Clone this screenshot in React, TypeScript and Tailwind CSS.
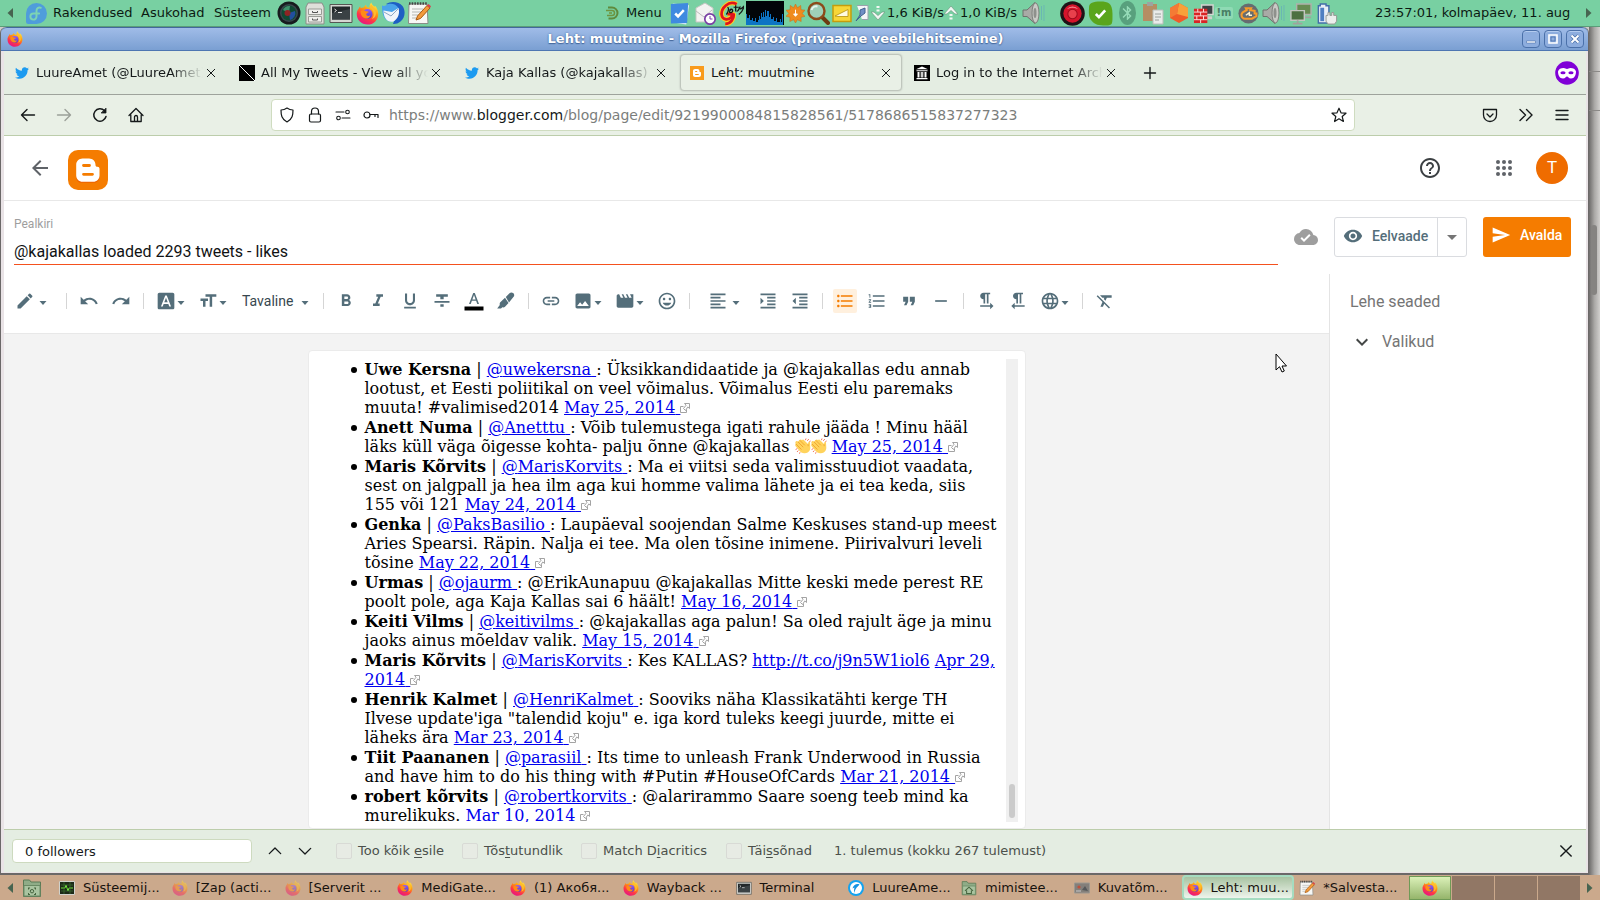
import { useId, type ReactNode } from "react";
import {
  MdArrowBack, MdCloudDone, MdEdit, MdExpandMore, MdFontDownload, MdFormatAlignLeft, MdFormatBold,
  MdFormatClear, MdFormatIndentDecrease, MdFormatIndentIncrease, MdFormatItalic, MdFormatListBulleted,
  MdFormatListNumbered, MdFormatQuote, MdFormatSize, MdFormatStrikethrough, MdFormatTextdirectionLToR,
  MdFormatTextdirectionRToL, MdFormatUnderlined, MdHelpOutline, MdImage, MdInsertEmoticon, MdLanguage, MdLink,
  MdMovie, MdRedo, MdRemove, MdSend, MdUndo, MdVisibility, MdBluetooth,
} from "react-icons/md";
import { FaTwitter } from "react-icons/fa";

/* ---------- drawings ---------- */

function Firefox({ className = "size-4" }: { className?: string }) {
  const id = useId();
  return (
    <svg viewBox="0 0 24 24" className={className} aria-hidden="true">
      <defs>
        <linearGradient id={id + "a"} x1="0.8" y1="0" x2="0.3" y2="1">
          <stop offset="0" stopColor="#fff44f" />
          <stop offset="0.4" stopColor="#ff980e" />
          <stop offset="0.7" stopColor="#ff3647" />
          <stop offset="1" stopColor="#e31587" />
        </linearGradient>
        <linearGradient id={id + "b"} x1="0.5" y1="0" x2="0.5" y2="1">
          <stop offset="0" stopColor="#9059ff" />
          <stop offset="1" stopColor="#5b3fc0" />
        </linearGradient>
      </defs>
      <path fill={`url(#${id}a)`} d="M2.6 7.2C3 6 3.7 5 4.4 4.4l.4 2.1c1-.8 2.300-1 3.400-.7.4-1.200 1.300-2.300 2.400-2.900-.1 1 .2 1.900 1.200 2.500l2.200.6C14 4 14.300 2 16 .4c.3 2 1.600 3 3.400 4.600l.4-1.200c2 2 3.400 5 3.400 8.600C23.200 18.800 18.200 23.600 12 23.600S.8 18.800.8 12.600c0-2 .6-4 1.800-5.400z" />
      <circle cx="12" cy="12.600" r="5.200" fill={`url(#${id}b)`} />
      <path fill="#ff8a16" d="M5 9.500c2-1.500 4-1 5.200.2 1.500 0 2.900.1 3 .8-.1.900-2.200 1.200-2.500 2-.2 1.800 2.300 2.700 4.300 1.300-.6 2.700-3 3.800-5 3.400C6.500 16.500 4.400 13 5 9.500z" />
      <path fill="#ffbd2f" d="M14.500 6.300c2.500 1.300 4 3.500 4 6.500 0 2-.8 3.800-2 5 3.600-1.200 5-5 4-8.200-.7-2.400-3-4.300-4.500-6.600-.8 1-1.300 2-1.500 3.300z" />
    </svg>
  );
}

function Thunderbird() {
  return (
    <svg viewBox="0 0 24 24" className="size-6" aria-hidden="true">
      <path fill="#1e5fc4" d="M5 3c5-3.500 13-2.500 16.500 2 3.500 5 2.500 12-2 15.500-2 1.800-5 2.700-7.500 2.500L17 8z" />
      <path fill="#4aa3ea" d="M1 4.500c1.500.7 3 .5 4-.3C9 1.500 15 3 17.500 7l-4 13C6 23 .5 16.500 1 4.500z" />
      <path fill="#f1f5fa" d="M2.500 9.500 11 11l6.500-4c1.500 5 0 10.500-5 13.500C6.500 22 2.500 17 2.500 9.500z" />
      <path fill="none" stroke="#8ea6c4" d="M3 11l7 4 7-7" />
    </svg>
  );
}

function Lens() {
  return (
    <svg viewBox="0 0 24 24" className="size-6" aria-hidden="true">
      <circle cx="12" cy="12" r="11.500" fill="#171b1e" />
      <circle cx="12" cy="12" r="9" fill="#39464c" />
      <circle cx="12" cy="12" r="7.500" fill="#0f4a33" />
      <path d="M6 9a7 7 0 0 1 7-4l-1 7z" fill="#3f8f6a" />
      <path d="M18 10a7 7 0 0 1-5 9l-1-7z" fill="#214f9e" />
      <circle cx="10.500" cy="12" r="3" fill="#8f2424" />
    </svg>
  );
}

function Cabinet() {
  return (
    <svg viewBox="0 0 24 24" className="size-6" aria-hidden="true">
      <path d="M5 2h14l2 4v17H3V6z" fill="#dedfda" stroke="#8b8d88" />
      <path d="M5.500 8h13v5.500h-13zM5.500 15.500h13V21h-13z" fill="#efefec" stroke="#9a9c97" />
      <path d="M9.500 10v1.500h5V10M9.500 17.500V19h5v-1.500" fill="none" stroke="#555" />
    </svg>
  );
}

function TerminalIcon({ className = "size-6" }: { className?: string }) {
  return (
    <svg viewBox="0 0 24 24" className={className} aria-hidden="true">
      <path d="M1 3.500h22v18H1z" fill="#d5d6d2" stroke="#555753" />
      <path d="M3 5.500h18v13H3z" fill="#23282a" />
      <path d="M3 12l18-4v10.500H3z" fill="#3a4144" />
      <path d="M5.500 8l2 1.500-2 1.500M9 11.500h4" fill="none" stroke="#e6e6e6" />
    </svg>
  );
}

function Notepad({ className = "size-6" }: { className?: string }) {
  return (
    <svg viewBox="0 0 24 24" className={className} aria-hidden="true">
      <path d="M2 3h18l1 19.500H1.500z" fill="#f7f7f5" stroke="#8a8c88" />
      <path d="M2 2.500h18" stroke="#444" strokeWidth="2.500" strokeDasharray="1.500 1.200" />
      <path d="M5 8h11M5 11h9M5 14h7M5 17h4" stroke="#b5b7b3" />
      <path d="M9 19l1.500-4L20 4.500l3 2.500-9.500 10.500z" fill="#f39a3c" stroke="#a85c12" />
      <path d="M20 4.500L21.500 3 24 5.200 23 7z" fill="#d9404d" />
    </svg>
  );
}

function Fedora() {
  return (
    <svg viewBox="0 0 24 24" className="size-[21px]" aria-hidden="true">
      <path d="M12 0a12 12 0 1 1 0 24H2.500A2.500 2.500 0 0 1 0 21.500V12A12 12 0 0 1 12 0z" fill="#4f9ddb" />
      <path d="M17 5.500c-3-1-5 .8-5 3.500v6.500a3.500 3.500 0 1 1-3.500-3.500H15" fill="none" stroke="#7cd3b4" strokeWidth="2.200" strokeLinecap="round" />
    </svg>
  );
}

function Speaker() {
  return (
    <svg viewBox="0 0 24 24" className="size-6" aria-hidden="true">
      <path d="M1 9h4l8-7.500c4 4 4 17 0 21L5 15.500H1z" fill="#a9aaa6" stroke="#6f716d" />
      <ellipse cx="13.500" cy="12" rx="3.500" ry="10" fill="#c9cac6" stroke="#7d7f7b" />
      <ellipse cx="13" cy="12" rx="1.500" ry="5" fill="#8e908c" />
      <path d="M19.500 5v14M22 4v16" stroke="#6ab7b3" />
    </svg>
  );
}

function BloggerLogo({ className, color }: { className: string; color: string }) {
  return (
    <svg viewBox="0 0 40 40" className={className} aria-hidden="true">
      <rect width="40" height="40" rx="10" fill={color} />
      <path fill="#e65100" d="M13 32.800h13c3 0 5.500-2.500 5.500-5.500v-1H8.200c0 4 2 6.500 4.800 6.500z" opacity=".6" />
      <path fill="#fff" d="M14.500 8.500H21c3.800 0 6.500 2.800 6.500 6.300 0 1.500.6 2 2 2 1.200 0 2 .8 2 2v6.700c0 3.500-2.700 6.300-6.300 6.300H14.500c-3.500 0-6.300-2.800-6.300-6.300V14.800c0-3.500 2.800-6.300 6.300-6.300z" />
      <path d="M15.500 15.500h6M15.500 24.300h9" stroke={color} strokeWidth="2.800" strokeLinecap="round" />
    </svg>
  );
}

function Line({ children, className = "size-4", width = 1.1 }: { children: ReactNode; className?: string; width?: number }) {
  return (
    <svg viewBox="0 0 16 16" className={className} fill="none" stroke="currentColor" strokeWidth={width} strokeLinecap="round" strokeLinejoin="round" aria-hidden="true">
      {children}
    </svg>
  );
}

function Caret({ className = "" }: { className?: string }) {
  return (
    <svg viewBox="0 0 8 4" className={"h-1 w-2 " + className} aria-hidden="true">
      <path d="M0.500 0h7L4 4z" fill="currentColor" />
    </svg>
  );
}

function Clap() {
  return (
    <svg viewBox="0 0 16 16" className="inline-block size-4 align-[-2px]" role="img" aria-label="👏">
      <path d="M.8 3.500c.8-.8 1.500-.4 2 .2L4.500 2c.9-.9 1.800-.6 2.300 0l1.500-.4L13 6l.3-1.500c.2-1 1.700-.8 1.700.4l.3 4.600c.1 3.200-2.200 5.600-5.300 5.800-2.600.2-4.500-1-6-3L.6 8.200C0 7.300.2 6.300.8 5.800.2 5 .2 4.100.8 3.500z" fill="#ffd35c" />
      <path d="M2.800 3.700l5.400 5.500M.9 5.900l5.500 5.600M4.800 2.300l5 5M13 6.200l.2 2" stroke="#ee9c25" strokeWidth=".8" fill="none" />
      <path d="M11 .5l-.6 1.700M13.800 1l-1.500 1.800M15.600 3l-1.200.6M.6 11.500l1.700-.9M2 14l1.300-1.500M4.500 15.700l.5-1.500" stroke="#f0674a" strokeWidth=".9" />
    </svg>
  );
}

function ExternalMark() {
  return (
    <svg viewBox="0 0 10 10" className="inline-block size-2.5 align-baseline" fill="none" stroke="#a3a3a3" aria-hidden="true">
      <path d="M3.500 3.500h-3v6h6v-3" />
      <path d="M4.500.5h5v5l-1.700-1.600-2.300 3.600-2-2 2.600-3.300z" />
    </svg>
  );
}

function PanelArrow({ back = false }: { back?: boolean }) {
  return (
    <svg viewBox="0 0 6 10" className="h-2.5 w-1.5 shrink-0" aria-hidden="true">
      <path d={back ? "M6 0v10L0.500 5z" : "M0 0v10L5.500 5z"} fill="#476450" />
    </svg>
  );
}

/* ---------- desktop panel ---------- */

function Slot({ children, className = "w-[26px]" }: { children: ReactNode; className?: string }) {
  return <span className={"flex h-full shrink-0 items-center justify-center " + className}>{children}</span>;
}

function TopPanel() {
  return (
    <header className="flex h-[27px] shrink-0 items-center border-b border-[#5b9c79] bg-[#78d0a2] text-[13px] text-[#0c1a12]">
      <Slot className="w-5"><PanelArrow back /></Slot>
      <nav className="flex h-full items-center">
        <button className="flex w-[118px] items-center gap-1.5 pl-1.5"><Fedora />Rakendused</button>
        <button className="w-[76px] pl-[3px] text-left">Asukohad</button>
        <button className="w-[62px] text-left">Süsteem</button>
      </nav>
      <div className="flex h-full items-center">
        <Slot><Lens /></Slot>
        <Slot><Cabinet /></Slot>
        <Slot><TerminalIcon /></Slot>
        <Slot><Firefox className="size-[23px]" /></Slot>
        <Slot><Thunderbird /></Slot>
        <Slot><Notepad /></Slot>
      </div>
      <div className="ml-auto flex h-full items-center">
        <button className="flex w-[60px] items-center gap-1.5">
          <svg viewBox="0 0 14 14" className="size-3.5 shrink-0" fill="none" aria-hidden="true">
            <path d="M2 1.500h4a5.500 5.500 0 0 1 0 11H2.500" stroke="#5f8a3c" strokeWidth="2" />
            <path d="M0 4.500h6a2.500 2.500 0 0 1 0 5H1M3 7h3" stroke="#6e9440" strokeWidth="1.500" />
          </svg>
          Menu
        </button>
        <Slot>
          <svg viewBox="0 0 24 24" className="size-[23px]" aria-hidden="true">
            <path d="M5 1.500l17 2-3 20-14-2z" fill="#dceafa" />
            <path d="M3 2l18-1-1 21-17 .5z" fill="#3f8ae0" />
            <path d="M7.500 12l3 3 6-6.500" fill="none" stroke="#fff" strokeWidth="2.600" />
          </svg>
        </Slot>
        <Slot>
          <svg viewBox="0 0 24 24" className="size-6" aria-hidden="true">
            <path d="M3 7l9-5 8 5v14H3z" fill="#f3f3f1" stroke="#c3c5c1" />
            <path d="M3 10l8 6 8-7" fill="none" stroke="#bbb" />
            <circle cx="17" cy="18" r="5.200" fill="#fff" stroke="#7a3fa5" strokeWidth="1.700" />
            <path d="M17 15v3h2.500" fill="none" stroke="#7a3fa5" />
          </svg>
        </Slot>
        <Slot>
          <svg viewBox="0 0 24 24" className="size-[25px]" fill="none" aria-hidden="true">
            <path d="M17 3C9-1 2 7 2.500 13c.5 5 6 6 9.500 2.500l.5-3H8M14 12c1 5-3 10-8 10" stroke="#ffd21f" strokeWidth="4.500" />
            <path d="M17 3C9-1 2 7 2.500 13c.5 5 6 6 9.500 2.500l.5-3H8M14 12c1 5-3 10-8 10" stroke="#e0141c" strokeWidth="2.600" />
            <path d="M8 6c2 0 1 5-1 7M10 9c3-3 4 1 2 2s-3-1 0-3M16 4v6M14 6h5M17 10c2 0 2-3 3-4 0 3 2 1 4-1-1 4-2 6-5 8" stroke="#161616" strokeWidth="1.200" />
          </svg>
        </Slot>
        <svg viewBox="0 0 38 24" className="ml-0.5 h-6 w-[38px]" aria-hidden="true">
          <path d="M0 0h38v24H0z" fill="#020509" />
          <path d="M0 24V13h1v4h2v-3h1v5h2v-2h1v3h2v-3h1v4h2v-2h1v-4h1v3h1v-6h1v4h1v-5h1v5h1v-7h1v6h1v-5h2v6h1v-3h1v5h2v-2h1v4h2v-3h1v4h3v-3h1v3h1v-8h1v12z" fill="#0d74c4" />
        </svg>
        <Slot className="w-[22px]">
          <svg viewBox="0 0 20 20" className="size-[19px]" aria-hidden="true">
            <path d="M10 0l2 4 3.500-2.500L15.800 6l4.200.5L17 10l3 3-4.200 1 .2 4.500-4-2-2 3.500-2-3.500-4 2 .2-4.500L0 13l3-3-3-3.500L4.200 6l.3-4.500L8 4z" fill="#ef8b1d" stroke="#c9630d" strokeWidth=".5" />
            <path d="M10 6v5M8 10.500l2 2.500 2-2.500z" fill="#fff" stroke="#fff" />
          </svg>
        </Slot>
        <Slot className="w-6">
          <svg viewBox="0 0 24 24" className="size-6" aria-hidden="true">
            <path d="M15 15l7 7" stroke="#6d3b12" strokeWidth="4" strokeLinecap="round" />
            <circle cx="10.500" cy="10" r="8" fill="#9fd0b8" stroke="#8c4a1a" strokeWidth="2.400" />
            <path d="M5.500 9a5 5 0 0 1 6-3.500" stroke="#e9f6ef" strokeWidth="2" fill="none" />
          </svg>
        </Slot>
        <Slot className="w-6">
          <svg viewBox="0 0 20 18" className="h-[19px] w-5" aria-hidden="true">
            <path d="M1 1h18v16H1z" fill="#f7d637" stroke="#c49c0d" strokeWidth="1.500" />
            <path d="M3 11.500L16 5v7H6z" fill="#fffbe0" stroke="#b4900e" strokeWidth=".8" />
          </svg>
        </Slot>
        <Slot className="w-[15px]">
          <svg viewBox="0 0 14 18" className="h-[18px] w-3.5" aria-hidden="true">
            <path d="M2 1.500h11v14H7" fill="#f4f5f7" stroke="#9aa2ad" />
            <path d="M1 17l4-6V6l5-2v5l-4 3z" fill="#6f8fc4" stroke="#41618f" />
          </svg>
        </Slot>
        <span className="flex w-[75px] items-center gap-0.5 pl-0.5 whitespace-nowrap">
          <svg viewBox="0 0 14 16" className="h-4 w-3.5 shrink-0" aria-hidden="true"><path d="M0 7h3l4 3.500L11 7h3l-7 8z" fill="#f1f7f3" stroke="#6f9a82" strokeWidth=".7" /><path d="M7 1v6" stroke="#f1f7f3" strokeWidth="3" strokeDasharray="2 1.500" /></svg>
          1,6 KiB/s
        </span>
        <span className="flex w-[76px] items-center gap-0.5 whitespace-nowrap">
          <svg viewBox="0 0 14 16" className="h-4 w-3.5 shrink-0" aria-hidden="true"><path d="M0 9h3l4-3.500L11 9h3L7 1z" fill="#f1f7f3" stroke="#6f9a82" strokeWidth=".7" /><path d="M7 9v6" stroke="#f1f7f3" strokeWidth="3" strokeDasharray="2 1.500" /></svg>
          1,0 KiB/s
        </span>
        <Slot className="w-7"><Speaker /></Slot>
      </div>
      <div className="ml-2.5 flex h-full items-center">
        <Slot className="w-7">
          <svg viewBox="0 0 24 24" className="size-[25px]" aria-hidden="true">
            <circle cx="12" cy="12" r="11.800" fill="#1e1416" />
            <circle cx="12" cy="12" r="8.800" fill="#d5142b" />
            <circle cx="12" cy="12.500" r="4.500" fill="#e8404c" stroke="#9f0b1d" />
            <path d="M6.500 8a7 7 0 0 1 11 0c-3-2-8-2-11 0z" fill="#f38e94" />
          </svg>
        </Slot>
        <Slot className="w-7">
          <svg viewBox="0 0 24 24" className="size-[25px]" aria-hidden="true">
            <path d="M1 6c0-4 4-5.500 11-5.500S23.500 2 23.500 12 24 23.500 17 23.500 7 23 3.500 19 1 10 1 6z" fill="#5aa51c" />
            <path d="M7.500 12.500l3 3 6-6.500" fill="none" stroke="#fff" strokeWidth="2.600" />
          </svg>
        </Slot>
        <Slot>
          <span className="flex h-6 w-[17px] items-center justify-center rounded-[50%] bg-[#58a07d] text-[#96dcb8]"><MdBluetooth size={20} /></span>
        </Slot>
        <Slot>
          <svg viewBox="0 0 22 24" className="h-6 w-[22px]" aria-hidden="true">
            <path d="M1 3h14v17H1z" fill="#b58d63" /><path d="M5 1h6v4H5z" fill="#9da3a0" />
            <path d="M11 9h10v14H11z" fill="#e9ebe9" stroke="#b9bdba" /><path d="M13 13h6M13 16h6M13 19h4" stroke="#9aa09c" />
          </svg>
        </Slot>
        <Slot>
          <svg viewBox="0 0 20 22" className="h-[22px] w-5" aria-hidden="true">
            <path d="M1 6l9-5 9 5v10l-9 5-9-5z" fill="#f05a28" /><path d="M10 1l9 5v9L8 12z" fill="#f9a13a" /><path d="M10 1L8 12l-7 4V6z" fill="#f47b35" />
          </svg>
        </Slot>
        <Slot className="w-[22px]">
          <svg viewBox="0 0 22 22" className="size-[21px]" aria-hidden="true">
            <path d="M9 2h12v10H9z" fill="#3c4144" stroke="#d5d6d2" strokeWidth="1.500" /><path d="M14 14h6v3h-6z" fill="#cfd0cc" />
            <path d="M1 6h14v15H1z" fill="#d92424" />
            <path d="M1 9.500h14M1 13.500h14M1 17.500h14M5 6v3.500M11 6v3.500M8 9.500v4M4 13.500v4M11 13.500v4M8 17.500V21" stroke="#fbe3e3" />
          </svg>
        </Slot>
        <Slot className="w-5">
          <span className="rounded-xs bg-[#8fdab4] px-0.5 text-[10px] leading-3 font-bold text-[#498065]">!m</span>
        </Slot>
        <Slot className="w-7">
          <svg viewBox="0 0 24 24" className="size-[21px]" aria-hidden="true">
            <circle cx="12" cy="12" r="11.500" fill="#666c70" />
            <path d="M4 13c1-4 4-3 6-5l-1-2h6l-1 2 5 1v3h2v3l-5 3H8c-2 0-4-2-4-5z" fill="none" stroke="#f59b2b" strokeWidth="2.400" />
            <path d="M9 14l4-3v3h3" stroke="#fff3cf" strokeWidth="1.600" fill="none" />
          </svg>
        </Slot>
        <Slot className="w-6"><Speaker /></Slot>
        <Slot className="w-7">
          <svg viewBox="0 0 24 24" className="size-[23px]" aria-hidden="true">
            <path d="M8 2h15v11H8z" fill="#668b52" stroke="#aeb2ac" strokeWidth="1.500" />
            <path d="M2 9h14v10H2z" fill="#4c7042" stroke="#c3c6c1" strokeWidth="1.500" />
            <path d="M4 22.500h10M9 19v3M17 16h6" stroke="#9fa39d" strokeWidth="1.800" />
          </svg>
        </Slot>
        <Slot>
          <svg viewBox="0 0 22 24" className="h-[23px] w-[22px]" aria-hidden="true">
            <path d="M2 4h2V2h6v2h3v18H2z" fill="#e8eef7" stroke="#426da9" strokeWidth="1.500" /><path d="M4 6h4v14H4z" fill="#4f7fc2" />
            <path d="M10 14h2v-3h2v3h2v-3h2v3h3v6l-2 3h-7l-2-3z" fill="#eceeec" stroke="#949893" />
          </svg>
        </Slot>
      </div>
      <time className="ml-[35px] w-[202px] whitespace-nowrap">23:57:01, kolmapäev, 11. aug</time>
      <Slot className="w-[23px]"><PanelArrow /></Slot>
    </header>
  );
}

/* ---------- browser ---------- */

function TitleBar() {
  const button = "flex size-[18px] items-center justify-center rounded border border-[#4a70a9] bg-[#8dadde] text-white shadow-[inset_0_1px_0_#b3cbef]";
  return (
    <div className="flex h-6 shrink-0 items-center rounded-t-md border-t border-b border-t-[#42689c] border-b-[#4d76b2] bg-linear-to-b from-[#a0bce8] to-[#7a9fd2] pr-1 pl-1.5">
      <Firefox className="size-4" />
      <h1 className="flex-1 pl-1.5 text-center text-[13px] font-bold text-white [text-shadow:0_1px_1px_#45689c,0_0_2px_#45689c]">
        Leht: muutmine - Mozilla Firefox (privaatne veebilehitsemine)
      </h1>
      <div className="flex gap-1">
        <button className={button} aria-label="Minimeeri"><svg viewBox="0 0 12 12" className="size-3"><path d="M1.500 8h9v2h-9z" fill="#fff" stroke="#4a70a9" strokeWidth=".6" /></svg></button>
        <button className={button} aria-label="Maksimeeri"><svg viewBox="0 0 12 12" className="size-3"><path d="M2 2h8v8H2z" fill="none" stroke="#fff" strokeWidth="1.600" /><path d="M4 4h4v4H4z" fill="none" stroke="#4a70a9" strokeWidth=".8" /></svg></button>
        <button className={button} aria-label="Sulge"><svg viewBox="0 0 12 12" className="size-3"><path d="M2.500 2.500l7 7M9.500 2.500l-7 7" stroke="#4a70a9" strokeWidth="3.400" /><path d="M2.500 2.500l7 7M9.500 2.500l-7 7" stroke="#fff" strokeWidth="2" /></svg></button>
      </div>
    </div>
  );
}

function CloseX({ className = "size-2.5" }: { className?: string }) {
  return (
    <svg viewBox="0 0 10 10" className={className} stroke="currentColor" strokeWidth="1" aria-hidden="true"><path d="M1 1l8 8M9 1l-8 8" /></svg>
  );
}

const tabs: { title: string; icon: ReactNode; active?: boolean }[] = [
  { title: "LuureAmet (@LuureAmet) / Twitter", icon: <FaTwitter size={14} color="#1d9bf0" /> },
  {
    title: "All My Tweets - View all your tweets",
    icon: <svg viewBox="0 0 16 16" className="size-4"><path d="M0 0h16v16H0z" /><path d="M0 0l16 16" stroke="#fff" /></svg>,
  },
  { title: "Kaja Kallas (@kajakallas) / Twitter", icon: <FaTwitter size={14} color="#1d9bf0" /> },
  {
    title: "Leht: muutmine",
    active: true,
    icon: (
      <svg viewBox="0 0 14 14" className="size-3.5">
        <path d="M0 0h14v14H0z" fill="#f99b1c" />
        <path d="M5 3h2.500C9 3 9.500 4 9.500 5.300c0 .6.200.8.800.8.500 0 .7.300.7.700V9c0 1.300-.9 2-2 2H5c-1.200 0-2-.9-2-2V5c0-1.200.9-2 2-2z" fill="#fff" />
        <path d="M5.200 5.500h2M5.200 8.500h3.500" stroke="#f99b1c" />
      </svg>
    ),
  },
  {
    title: "Log in to the Internet Archive",
    icon: (
      <svg viewBox="0 0 16 16" className="size-4">
        <path d="M0 0h16v16H0z" />
        <path d="M2 4.200L8 1.500l6 2.700zM2.500 5.200h11v1h-11zM3.500 7h1.500v5.500H3.500zM7.200 7h1.600v5.500H7.200zM11 7h1.500v5.500H11zM5.500 7h.8v5.500h-.8zM9.700 7h.8v5.500h-.8zM2.500 13h11v1.200h-11z" fill="#fff" />
      </svg>
    ),
  },
];

function TabStrip() {
  return (
    <div className="flex h-11 shrink-0 items-center gap-[3px] border-b border-[#9ea39c] bg-[#e4ede2] pl-px text-[13px] text-[#15191a]">
      {tabs.map((tab) => (
        <div
          key={tab.title}
          className={
            "flex h-[37px] w-[222px] min-w-0 items-center rounded border pl-2 pr-2.5 " +
            (tab.active ? "border-[#bfc6bd] bg-[#e9f0e6] shadow-[0_0_2px_rgba(0,0,0,0.2)]" : "border-transparent")
          }
        >
          <a href="#tab" className="mr-[3px] flex min-w-0 flex-1 items-center gap-1.5">
            <span className="flex w-4 shrink-0 justify-center">{tab.icon}</span>
            <span className={"flex-1 overflow-hidden whitespace-nowrap " + (tab.active ? "" : "[mask-image:linear-gradient(to_right,black_calc(100%-32px),transparent)]")}>
              {tab.title}
            </span>
          </a>
          <button aria-label="Sulge kaart" className="flex size-2.5 shrink-0"><CloseX className="size-2.5" /></button>
        </div>
      ))}
      <button aria-label="Uus kaart" className="ml-1 flex size-8 items-center justify-center">
        <Line width={1.4} className="size-4"><path d="M8 2.500v11M2.500 8h11" /></Line>
      </button>
      <svg viewBox="0 0 24 24" className="mr-[7px] ml-auto size-6" role="img" aria-label="Privaatne veebilehitsemine">
        <circle cx="12" cy="12" r="11.800" fill="#8000d7" />
        <path d="M3 10.500C3.500 8 6 7 8.500 7c2 0 2 1 3.500 1s1.500-1 3.500-1c2.500 0 5 1 5.500 3.500 0 3.500-1.500 7-5 7-2.500 0-2.700-2-4-2s-1.500 2-4 2c-3.500 0-5-3.500-5-7z" fill="#fff" />
        <ellipse cx="8" cy="11.800" rx="2.600" ry="1.500" fill="#8000d7" /><ellipse cx="16" cy="11.800" rx="2.600" ry="1.500" fill="#8000d7" />
      </svg>
    </div>
  );
}

function NavBar() {
  const b = "flex h-8 w-9 items-center justify-center";
  const u = "flex w-7 justify-center";
  return (
    <div className="flex h-[41px] shrink-0 items-center border-b border-[#bccdab] bg-[#e9f0e6] px-1.5 text-[#15191a]">
      <button aria-label="Tagasi" className={b}><Line width={1.4}><path d="M14.500 8h-13M7 2.500L1.500 8 7 13.500" /></Line></button>
      <button aria-label="Edasi" className={b + " text-[#9ba099]"}><Line width={1.4}><path d="M1.500 8h13M9 2.500L14.500 8 9 13.500" /></Line></button>
      <button aria-label="Laadi uuesti" className={b}><Line width={1.5}><path d="M14 9.500a6.200 6.200 0 1 1-1.500-5.800" /><path d="M14 1.500v4.500H9.500z" fill="currentColor" strokeWidth={0.8} /></Line></button>
      <button aria-label="Avaleht" className={b}><Line width={1.3}><path d="M1 8.500L8 1.500l7 7M2.800 7.500V14.500h10.400V7.500M6.500 14.500V10a1.500 1.500 0 0 1 3 0v4.500" /></Line></button>
      <div className="mx-[117px] flex h-8 min-w-0 flex-1 items-center rounded border border-[#cfdcc0] bg-white px-px">
        <span className={u}><Line className="size-4" width={1.2}><path d="M8 1c2 1.500 4 2 6 2 0 5-.5 9-6 12C2.500 12 2 8 2 3c2 0 4-.5 6-2z" /></Line></span>
        <span className={u}><Line className="size-4" width={1.2}><rect x="2.500" y="7" width="11" height="8" rx="1.500" /><path d="M4.500 7V4.500a3.500 3.500 0 0 1 7 0V7" /></Line></span>
        <span className={u}><Line><path d="M1 5h8M7 11h8" /><circle cx="12.500" cy="5" r="1.800" /><circle cx="3.500" cy="11" r="1.800" /></Line></span>
        <span className={u}><Line width={1.2}><circle cx="4" cy="8" r="3" /><path d="M7 7.500h8v3M12 7.500v2" /></Line></span>
        <div className="min-w-0 flex-1 truncate pl-1 text-sm text-[#7b7e7c]">
          https://www.<span className="text-[#15191a]">blogger.com</span>/blog/page/edit/9219900084815828561/5178686515837277323
        </div>
        <button aria-label="Lisa järjehoidja" className={u}><Line className="size-4" width={1.2}><path d="M8 1.200l2 4.600 5 .4-3.800 3.300 1.200 5L8 11.800l-4.400 2.700 1.200-5L1 6.200l5-.4z" /></Line></button>
      </div>
      <button aria-label="Pocket" className={b}><Line width={1.3}><path d="M1.500 2.500h13v5.500a6.500 6.500 0 0 1-13 0z" /><path d="M5 7l3 3 3-3" /></Line></button>
      <button aria-label="Veel" className={b}><Line width={1.4}><path d="M2 2.500L7.500 8 2 13.500M8.500 2.500L14 8l-5.500 5.500" /></Line></button>
      <button aria-label="Menüü" className={b}><Line width={1.4}><path d="M2 3.500h12M2 8h12M2 12.500h12" /></Line></button>
    </div>
  );
}

/* ---------- blogger ---------- */

function BloggerHeader() {
  return (
    <div className="flex h-[65px] shrink-0 items-center border-b border-[#e8e8e8] bg-white pr-[18px] pl-6">
      <button aria-label="Tagasi" className="text-[#5f6368]"><MdArrowBack size={24} /></button>
      <BloggerLogo className="mt-1 ml-4 size-10" color="#f57c00" />
      <button aria-label="Abi" className="ml-auto text-[#3c4043]"><MdHelpOutline size={24} /></button>
      <button aria-label="Google'i rakendused" className="ml-[50px]">
        <svg viewBox="0 0 24 24" className="size-6" fill="#5f6368" aria-hidden="true">
          {[6, 12, 18].map((y) => [6, 12, 18].map((x) => <circle key={x + "-" + y} cx={x} cy={y} r="2" />))}
        </svg>
      </button>
      <button aria-label="Konto" className="ml-5 size-8 rounded-full bg-[#ef6c00] text-[17px] text-white">T</button>
    </div>
  );
}

function TitleRow() {
  return (
    <div className="flex h-[73px] shrink-0 bg-white pr-[15px] pb-[9px] pl-2.5">
      <div className="flex flex-1 flex-col border-b border-[#f4511e]">
        <label htmlFor="page-title" className="mt-[15px] text-xs leading-4 text-[#9e9e9e]">Pealkiri</label>
        <input id="page-title" defaultValue="@kajakallas loaded 2293 tweets - likes" className="mt-2 h-6 w-full bg-transparent text-base text-[#111314] outline-none" />
      </div>
      <div className="flex pt-4 pl-4">
        <span className="flex h-10 w-6 items-center text-[#9e9e9e]"><MdCloudDone size={24} /></span>
        <div className="ml-4 flex h-10 rounded-[3px] border border-[#dadce0] text-[#546e7a]">
          <button className="flex w-[102px] items-center gap-[9px] pb-0.5 pl-2 text-sm font-medium"><MdVisibility size={20} />Eelvaade</button>
          <button aria-label="Eelvaate valikud" className="flex w-[29px] items-center justify-center border-l border-[#dadce0] text-[#757575]">
            <svg viewBox="0 0 10 5" className="h-[5px] w-2.5"><path d="M0 0h10L5 5z" fill="currentColor" /></svg>
          </button>
        </div>
        <button className="ml-4 flex h-10 w-[88px] items-center gap-[9px] rounded-[3px] bg-[#f57c00] pb-1 pl-2 text-sm font-medium text-white"><MdSend size={20} />Avalda</button>
      </div>
    </div>
  );
}

function Tool({ label, children, active = false }: { label: string; children: ReactNode; active?: boolean }) {
  return (
    <button aria-label={label} title={label} className="flex h-6 w-8 shrink-0 items-center justify-center">
      <span className={"flex size-6 items-center justify-center rounded-xs " + (active ? "bg-[#fff0de] text-[#f57c00]" : "")}>{children}</span>
    </button>
  );
}

function DropTool({ label, children, className = "w-[42px] gap-px pl-1.5" }: { label: string; children: ReactNode; className?: string }) {
  return (
    <button aria-label={label} title={label} className={"flex h-6 shrink-0 items-center " + className}>
      {children}
      <Caret className="mt-1" />
    </button>
  );
}

function Sep() {
  return <span className="mx-1.5 h-4 w-px shrink-0 bg-[#d5d5d5]" />;
}

function Toolbar() {
  return (
    <div role="toolbar" className="flex h-[60px] shrink-0 items-center border-b border-[#e8e8e8] bg-white pb-1.5 pl-[7px] text-[#546e7a]">
      <DropTool label="Koostamisvaade" className="w-[49px] gap-1 pl-1"><MdEdit size={20} /></DropTool>
      <Sep />
      <Tool label="Võta tagasi"><MdUndo size={20} /></Tool>
      <Tool label="Tee uuesti"><MdRedo size={20} /></Tool>
      <Sep />
      <DropTool label="Font"><MdFontDownload size={20} /></DropTool>
      <DropTool label="Teksti suurus"><MdFormatSize size={20} /></DropTool>
      <button className="flex h-6 w-[83px] shrink-0 items-center justify-between pr-2 pl-2 text-sm text-[#37474f]">Tavaline<Caret className="mt-1 text-[#546e7a]" /></button>
      <Sep />
      <Tool label="Paks"><MdFormatBold size={20} /></Tool>
      <Tool label="Kursiiv"><MdFormatItalic size={20} /></Tool>
      <Tool label="Allajoonitud"><MdFormatUnderlined size={20} /></Tool>
      <Tool label="Läbikriipsutatud"><MdFormatStrikethrough size={20} /></Tool>
      <Tool label="Teksti värv">
        <svg viewBox="0 0 20 20" className="size-5"><path d="M9.200 2h1.600l4.200 11h-1.700l-1.200-3.200H7.900L6.700 13H5zM8.400 8.400h3.200L10 4z" fill="currentColor" /><path d="M0.500 15.500h19v4h-19z" fill="#000" /></svg>
      </Tool>
      <Tool label="Esiletõstu värv">
        <svg viewBox="0 0 20 20" className="size-5" fill="currentColor"><path d="M9.800 6L13.500 2.300c1.200-1.200 2.800-1 3.900 0s1.100 2.600 0 3.800L13 11.500z" /><path d="M9 6.800l3.500 5.300-3.500 3.700c-.7.700-1.800.8-2.600.5L5 17.500H1.200l2.600-3.600c-.3-.9-.1-1.900.5-2.600z" /></svg>
      </Tool>
      <Sep />
      <Tool label="Lisa link"><MdLink size={20} /></Tool>
      <DropTool label="Lisa pilt"><MdImage size={20} /></DropTool>
      <DropTool label="Lisa video"><MdMovie size={20} /></DropTool>
      <Tool label="Lisa erimärke"><MdInsertEmoticon size={20} /></Tool>
      <Sep />
      <DropTool label="Joondus" className="w-14 gap-1 pl-3"><MdFormatAlignLeft size={20} /></DropTool>
      <Tool label="Suurenda taanet"><MdFormatIndentIncrease size={20} /></Tool>
      <Tool label="Vähenda taanet"><MdFormatIndentDecrease size={20} /></Tool>
      <Sep />
      <Tool label="Täpploend" active><MdFormatListBulleted size={20} /></Tool>
      <Tool label="Nummerdatud loend"><MdFormatListNumbered size={20} /></Tool>
      <Tool label="Tsitaat"><MdFormatQuote size={20} /></Tool>
      <Tool label="Lehemurd"><MdRemove size={20} /></Tool>
      <Sep />
      <Tool label="Vasakult paremale"><MdFormatTextdirectionLToR size={20} /></Tool>
      <Tool label="Paremalt vasakule"><MdFormatTextdirectionRToL size={20} /></Tool>
      <DropTool label="Sisestustööriistad"><MdLanguage size={20} /></DropTool>
      <Sep />
      <Tool label="Eemalda vorming"><MdFormatClear size={20} /></Tool>
    </div>
  );
}

const tweets: { name: string; handle: string; body: ReactNode; date: string }[] = [
  { name: "Uwe Kersna", handle: "uwekersna", body: "Üksikkandidaatide ja @kajakallas edu annab lootust, et Eesti poliitikal on veel võimalus. Võimalus Eesti elu paremaks muuta! #valimised2014", date: "May 25, 2014" },
  { name: "Anett Numa", handle: "Anetttu", body: <>Võib tulemustega igati rahule jääda ! Minu hääl läks küll väga õigesse kohta- palju õnne @kajakallas <Clap /><Clap /></>, date: "May 25, 2014" },
  { name: "Maris Kõrvits", handle: "MarisKorvits", body: "Ma ei viitsi seda valimisstuudiot vaadata, sest on jalgpall ja hea ilm aga kui homme valima lähete ja ei tea keda, siis 155 või 121", date: "May 24, 2014" },
  { name: "Genka", handle: "PaksBasilio", body: "Laupäeval soojendan Salme Keskuses stand-up meest Aries Spearsi. Räpin. Nalja ei tee. Ma olen tõsine inimene. Piirivalvuri leveli tõsine", date: "May 22, 2014" },
  { name: "Urmas", handle: "ojaurm", body: "@ErikAunapuu @kajakallas Mitte keski mede perest RE poolt pole, aga Kaja Kallas sai 6 häält!", date: "May 16, 2014" },
  { name: "Keiti Vilms", handle: "keitivilms", body: "@kajakallas aga palun! Sa oled rajult äge ja minu jaoks ainus mõeldav valik.", date: "May 15, 2014" },
  { name: "Maris Kõrvits", handle: "MarisKorvits", body: <>Kes KALLAS? <a href="#link" className="text-[#0000ee] underline">http://t.co/j9n5W1iol6</a></>, date: "Apr 29, 2014" },
  { name: "Henrik Kalmet", handle: "HenriKalmet", body: "Sooviks näha Klassikatähti kerge TH Ilvese update'iga \"talendid koju\" e. iga kord tuleks keegi juurde, mitte ei läheks ära", date: "Mar 23, 2014" },
  { name: "Tiit Paananen", handle: "parasiil", body: "Its time to unleash Frank Underwood in Russia and have him to do his thing with #Putin #HouseOfCards", date: "Mar 21, 2014" },
  { name: "robert kõrvits", handle: "robertkorvits", body: "@alarirammo Saare soeng teeb mind ka murelikuks.", date: "Mar 10, 2014" },
];

function Editor() {
  return (
    <div className="flex min-h-0 flex-1 justify-center bg-[#f3f3f3] pt-4">
      <div className="flex min-h-0 w-[718px] rounded border border-[#ebebeb] bg-white px-[7px] pt-2 pb-1.5">
        <ul className="min-h-0 flex-1 overflow-hidden pt-px pr-2 pl-[49px] font-['DejaVu_Serif',serif] text-base leading-[19px] text-black">
          {tweets.map((t) => (
            <li
              key={t.name + t.date}
              className="-ml-4 pb-px pl-4 before:mr-2 before:-ml-3.5 before:inline-block before:size-1.5 before:rounded-full before:bg-black before:align-[2px] before:content-['']"
            >
              <b>{t.name}</b> | <a href="#profile" className="text-[#0000ee] underline">@{t.handle} </a>: {t.body}{" "}
              <a href="#tweet" className="text-[#0000ee] underline">{t.date} </a><ExternalMark />
            </li>
          ))}
        </ul>
        <div className="flex w-3 shrink-0 flex-col items-center justify-end bg-[#f0f0f0] pb-1">
          <span className="h-[34px] w-1.5 rounded-full bg-[#cbcbcb]" />
        </div>
      </div>
    </div>
  );
}

function Settings() {
  return (
    <aside className="w-[257px] shrink-0 border-l border-[#e4e4e4] bg-white pl-5 text-base text-[#757575]">
      <h2 className="mt-4 leading-6">Lehe seaded</h2>
      <button className="mt-4 flex items-center gap-2 leading-6"><MdExpandMore size={24} className="text-[#444746]" />Valikud</button>
    </aside>
  );
}

function FindBar() {
  const options = [
    { id: "f1", before: "Too kõik ", key: "e", after: "sile", w: "w-[126px]" },
    { id: "f2", before: "Tõs", key: "t", after: "utundlik", w: "w-[119px]" },
    { id: "f3", before: "Match D", key: "i", after: "acritics", w: "w-[145px]" },
    { id: "f4", before: "Täi", key: "s", after: "sõnad", w: "w-[108px]" },
  ];
  return (
    <div className="flex h-[43px] shrink-0 items-center border-t border-[#bccdab] bg-[#e4ede2] pr-3 pl-2 text-[13px] text-[#4b504b]">
      <input aria-label="Otsi lehelt" defaultValue="0 followers" className="h-6 w-60 rounded border border-[#cddabf] bg-white px-3 text-[#15191a] outline-none" />
      <button aria-label="Eelmine" className="ml-2 flex w-[30px] justify-center text-[#15191a]"><Line width={1.5} className="size-3.5"><path d="M1.500 11L8 4.500l6.500 6.500" /></Line></button>
      <button aria-label="Järgmine" className="mr-4 flex w-[30px] justify-center text-[#15191a]"><Line width={1.5} className="size-3.5"><path d="M1.500 5L8 11.500 14.500 5" /></Line></button>
      {options.map((o) => (
        <span key={o.id} className={"flex shrink-0 items-center gap-1.5 whitespace-nowrap " + o.w}>
          <input id={o.id} type="checkbox" className="size-4 appearance-none rounded-xs border border-[#d8dad5] bg-[#e7ebe4]" />
          <label htmlFor={o.id}>{o.before}<span className="underline underline-offset-2">{o.key}</span>{o.after}</label>
        </span>
      ))}
      <output>1. tulemus (kokku 267 tulemust)</output>
      <button aria-label="Sulge otsinguriba" className="ml-auto flex size-4 items-center justify-center text-[#15191a]"><CloseX className="size-3.5" /></button>
    </div>
  );
}

/* ---------- task bar ---------- */

function FolderIcon({ home = false, className = "size-5" }: { home?: boolean; className?: string }) {
  return (
    <svg viewBox="0 0 20 20" className={className} fill="none" aria-hidden="true">
      <path d="M1.500 2h6l1.500 2h9.500v14.500h-17z" fill="#8fac87" stroke="#5b7a56" />
      <path d="M2 7.500h16V18H2z" fill="#a9c4a0" stroke="#6a8a64" />
      {home ? (
        <path d="M5 13.500L10 9l5 4.500M7 13v4h6v-4" stroke="#47653f" strokeWidth="1.300" />
      ) : (
        <>
          <path d="M6.500 10v1.500M6.500 15v1.500M13.500 10v1.500M13.500 15v1.500M6 10h2M12 10h2M6 16.500h2M12 16.500h2" stroke="#47653f" />
          <circle cx="10" cy="13.200" r="1.700" stroke="#47653f" />
        </>
      )}
    </svg>
  );
}

const tasks: { text: string; icon: ReactNode; dim?: boolean; active?: boolean }[] = [
  {
    text: "Süsteemij...",
    icon: <svg viewBox="0 0 16 16" className="size-4"><path d="M.5 1.500h15v13H.5z" fill="#1c2a17" stroke="#d0d2cc" /><path d="M2 8h4l1-3 2 6 1-3h4" fill="none" stroke="#6fe03c" /><path d="M2 5h12M2 11h12M5 2v12M11 2v12" stroke="#3d7030" strokeWidth=".7" /></svg>,
  },
  { text: "[Zap (acti...", icon: <Firefox />, dim: true },
  { text: "[Serverit ...", icon: <Firefox />, dim: true },
  { text: "MediGate...", icon: <Firefox /> },
  { text: "(1) Акобя...", icon: <Firefox /> },
  { text: "Wayback ...", icon: <Firefox /> },
  { text: "Terminal", icon: <TerminalIcon className="size-4" /> },
  {
    text: "LuureAme...",
    icon: <svg viewBox="0 0 16 16" className="size-4"><circle cx="8" cy="8" r="8" fill="#14a3f0" /><circle cx="8" cy="8" r="6" fill="#fff" /><path d="M7 13c-.5-2 .3-3.500 1.200-4.800S10.500 6 11.500 4.500C9 3 5 5 4.500 8.500L6.500 7.500C6 9.500 5.500 11 7 13z" fill="#1593e2" /></svg>,
  },
  { text: "mimistee...", icon: <FolderIcon home className="size-4" /> },
  {
    text: "Kuvatõm...",
    icon: <svg viewBox="0 0 16 16" className="size-4"><path d="M.5 3h15v10H.5z" fill="#837f7a" stroke="#9c9890" /><circle cx="5" cy="7" r="1.600" fill="#c14f3a" /><path d="M8 10l3-4 3 5z" fill="#55585a" /><path d="M2 11h5" stroke="#ccc" /></svg>,
  },
  { text: "Leht: muu...", icon: <Firefox />, active: true },
  { text: "*Salvesta...", icon: <Notepad className="size-4" /> },
];

function TaskBar() {
  return (
    <footer className="flex h-[25px] shrink-0 items-center bg-[#cba98c] text-[13px] text-[#17120e]">
      <Slot className="w-5"><PanelArrow back /></Slot>
      <button aria-label="Töölaud" className="mr-3 ml-0.5"><FolderIcon /></button>
      <div className="mr-0.5 flex h-full min-w-0 flex-1">
        {tasks.map((t) => (
          <button
            key={t.text}
            className={
              "flex min-w-0 flex-1 items-center gap-2 overflow-hidden rounded border-2 pl-[3px] whitespace-nowrap " +
              (t.active ? "border-[#a5dcc0] bg-linear-to-b from-[#a8c3a2] to-[#eef4ec]" : "border-transparent")
            }
          >
            <span className={"shrink-0 " + (t.dim ? "opacity-50" : "")}>{t.icon}</span>
            {t.text}
          </button>
        ))}
      </div>
      <div className="flex h-full gap-px pt-px">
        <button aria-label="Tööala 1" className="flex w-[42px] items-center justify-center border border-[#6f9a56] bg-linear-to-b from-[#dbf0b8] to-[#95b56b]"><Firefox /></button>
        <button aria-label="Tööala 2" className="w-[42px] bg-[#917765]" />
        <button aria-label="Tööala 3" className="w-[42px] bg-[#917765]" />
        <button aria-label="Tööala 4" className="w-[42px] bg-[#917765]" />
      </div>
      <Slot className="w-5"><PanelArrow /></Slot>
    </footer>
  );
}

export default function App() {
  return (
    <div className="relative flex h-screen flex-col overflow-hidden bg-[#cba98c] font-['DejaVu_Sans',sans-serif]">
      <TopPanel />
      <div className="flex min-h-0 flex-1 bg-[#cfcdcb]">
        <main className="flex min-w-0 flex-1 flex-col rounded-t-md border-r border-b-2 border-l border-[#6b6868] bg-[#e9e3e6]">
          <TitleBar />
          <div className="mr-0.5 ml-[3px] flex min-h-0 flex-1 flex-col pb-px">
            <TabStrip />
            <NavBar />
            <section className="flex min-h-0 flex-1 flex-col bg-white font-[Roboto,sans-serif]">
              <BloggerHeader />
              <TitleRow />
              <div className="flex min-h-0 flex-1">
                <div className="flex min-w-0 flex-1 flex-col">
                  <Toolbar />
                  <Editor />
                </div>
                <Settings />
              </div>
            </section>
            <FindBar />
          </div>
        </main>
        <div className="flex w-[11px] shrink-0 flex-col bg-linear-to-r from-[#6e6c6b] via-[#aaa8a6] to-[#d2d0ce]">
          <span className="mt-11 h-10 border-y border-[#8b8987]" />
          <span className="mt-[114px] ml-0.5 h-[70px] w-1.5 rounded-full bg-[#858381]" />
        </div>
      </div>
      <TaskBar />
      <svg viewBox="0 0 12 20" className="absolute top-[353px] left-[1275px] h-5 w-3" aria-hidden="true">
        <path d="M1 1v16l3.500-3.300L7 19l2.300-1-2.300-5h4.500z" fill="#fff" stroke="#000" />
      </svg>
    </div>
  );
}
